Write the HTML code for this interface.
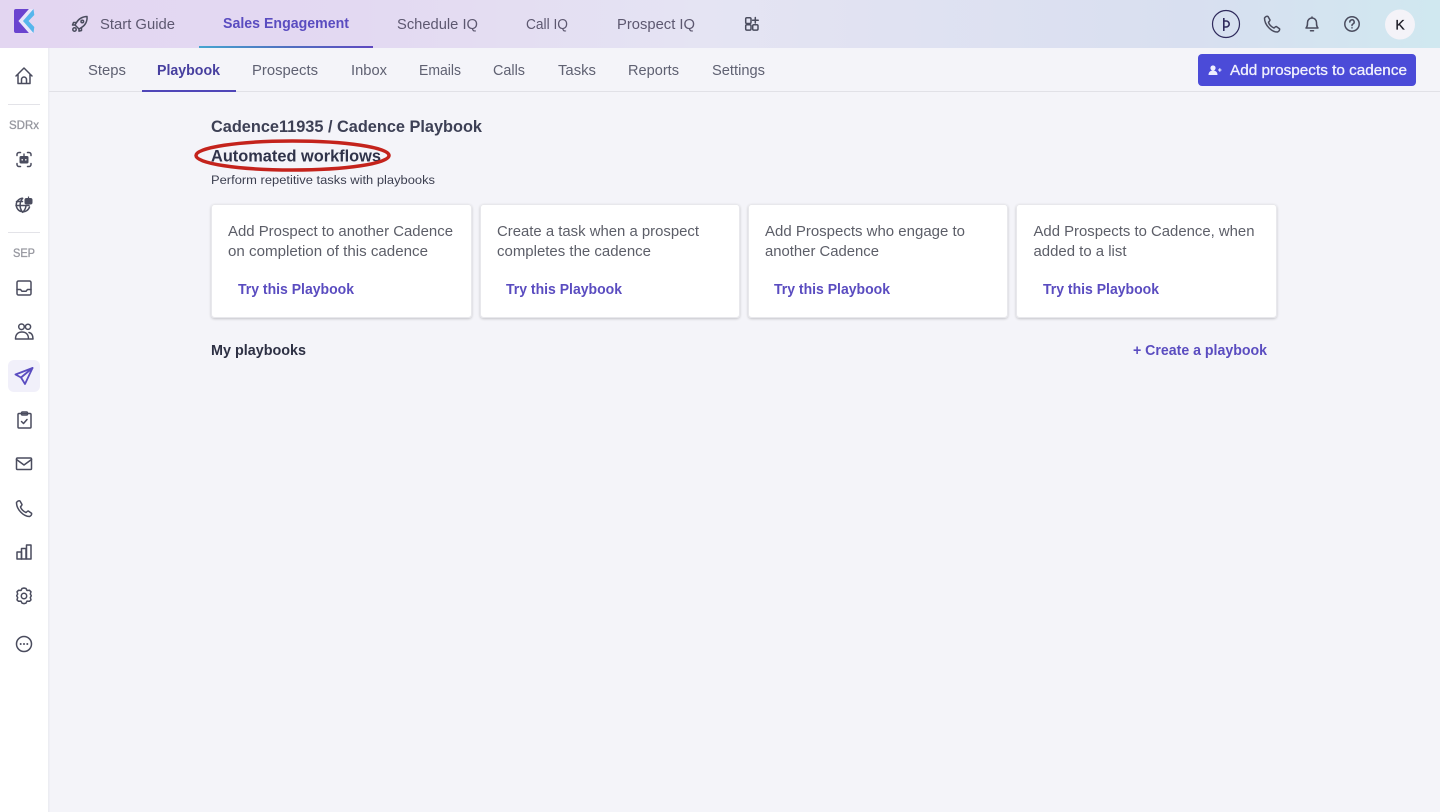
<!DOCTYPE html>
<html lang="en"><head><meta charset="utf-8"><title>Cadence Playbook</title>
<style>
html,body{margin:0;padding:0;width:1440px;height:812px;overflow:hidden;background:#f4f4f9}
svg{display:block;position:absolute;left:0;top:0;font-size:14px}
text{font-family:"Liberation Sans",sans-serif}
.top{fill:#5d5870;font-size:14.5px}
.tab{fill:#5f6172;font-size:14.5px}
.b{font-weight:bold}
.ct{fill:#5c5e68;font-size:14.5px}
.try{fill:#5a4cc0;font-weight:bold;font-size:14.5px}
.ic{fill:none;stroke:#4a4c5e;stroke-width:1.5;stroke-linecap:round;stroke-linejoin:round}
.card{fill:#fff;stroke:#e8e8ec;stroke-width:1;filter:url(#sh)}
</style></head><body>
<svg width="1440" height="812" viewBox="0 0 1440 812" xmlns="http://www.w3.org/2000/svg">
<defs>
<linearGradient id="tg" x1="0" x2="1" y1="0" y2="0"><stop offset="0" stop-color="#e3d6f1"/><stop offset=".25" stop-color="#e3d9f2"/><stop offset=".49" stop-color="#e5e4f3"/><stop offset=".83" stop-color="#d8dff0"/><stop offset="1" stop-color="#d0e8f0"/></linearGradient>
<linearGradient id="ug" x1="0" x2="1" y1="0" y2="0"><stop offset="0" stop-color="#45a5d0"/><stop offset=".5" stop-color="#5070c0"/><stop offset="1" stop-color="#5e48c0"/></linearGradient>
<filter id="sh" x="-5%" y="-5%" width="110%" height="115%"><feDropShadow dx="0" dy="1" stdDeviation="1.3" flood-color="#000" flood-opacity=".2"/></filter>
</defs>
<rect width="1440" height="812" fill="#f4f4f9"/>
<rect width="1440" height="48" fill="url(#tg)"/>
<rect x="199" y="46" width="174" height="2" fill="url(#ug)"/>
<rect y="48" width="48" height="764" fill="#fff"/>
<rect x="48" y="48" width="1.5" height="764" fill="#ecedf2"/>
<rect x="49" y="91" width="1391" height="1" fill="#e1e1e7"/>
<rect x="142" y="90" width="94" height="2" fill="#4f46b8"/>

<!-- logo -->
<path d="M16 9 H29 L18.500 21 L29 33 H16 a2 2 0 0 1 -2-2 V11 a2 2 0 0 1 2-2Z" fill="#6a44cf"/>
<path d="M29 9 L18.500 21 L29 33 H33.500 L23 21 L33.500 9Z" fill="#e9e6fb"/>
<path d="M33.500 9 L23 21 L33.500 33 L34.300 27 L28.500 21 L34.300 15Z" fill="#56b6ec"/>

<!-- rocket -->
<g class="ic">
<path d="M87 16.500 C82.500 16.500 78.500 19 76.500 22.500 L75 25 L79 29 L81.500 27.500 C85 25.500 87.500 21.500 87 16.500Z"/>
<circle cx="82.300" cy="21.500" r="1.300"/>
<path d="M76.500 22.500 L73.500 22.500 L72.500 25 L75 25 M81.500 27.500 L81.500 30.500 L79 31.200 L79 29"/>
<circle cx="74.500" cy="29.500" r="1.700"/>
</g>

<text class="top" x="100" y="29" textLength="75" lengthAdjust="spacingAndGlyphs">Start Guide</text>
<text class="b" x="223" y="28" textLength="126" lengthAdjust="spacingAndGlyphs" fill="#5a4cc0" font-size="14.5">Sales Engagement</text>
<text class="top" x="397" y="29" textLength="81" lengthAdjust="spacingAndGlyphs">Schedule IQ</text>
<text class="top" x="526" y="29" textLength="42" lengthAdjust="spacingAndGlyphs">Call IQ</text>
<text class="top" x="617" y="29" textLength="78" lengthAdjust="spacingAndGlyphs">Prospect IQ</text>
<g class="ic">
<rect x="745.700" y="17.700" width="5.300" height="5.800" rx="1.200"/><rect x="745.700" y="24.800" width="5.300" height="5.300" rx="1.200"/><rect x="752.700" y="24.800" width="5.300" height="5.300" rx="1.200"/>
<path d="M755.300 17.500v5.500M752.500 20.300h5.700"/>
</g>

<!-- right icons -->
<circle cx="1226" cy="24" r="13.500" fill="none" stroke="#2f2a5c" stroke-width="1.200"/>
<path d="M1223.800 18v13" stroke="#2f2a5c" stroke-width="1.600" fill="none"/>
<path d="M1224 21h2.200a3 3 0 0 1 0 6H1224" stroke="#2f2a5c" stroke-width="1.600" fill="none"/>
<path class="ic" transform="translate(1263.500 15.500)" d="M1 2.500 C2 1 3.500 .5 4.500 1 L6.500 4.500 C6.500 5.500 5.500 6 5 6.800 C5.500 9 8 11.500 10.500 12.500 C11.300 12 11.800 11 12.800 11 L16 13.200 C16.500 14.500 15.500 16 14 16.500 C8 16.500 1 9.500 1 2.500Z"/>
<g class="ic">
<path d="M1306 28 c1.500-1.500 1.500-3 1.500-5.500 a4.500 4.500 0 0 1 9 0 c0 2.500 0 4 1.500 5.500z"/>
<path d="M1310.500 30.800h3"/>
<path d="M1312 17v.8"/>
<circle cx="1352" cy="24" r="7.200"/>
<path d="M1349.800 22a2.200 2.200 0 1 1 3.300 1.900c-.8.5-1.100.9-1.100 1.600"/>
<path d="M1352 27.800v.1"/>
</g>
<circle cx="1400" cy="24.500" r="15" fill="#f4f3f8"/>
<text x="1400" y="29.500" text-anchor="middle" font-size="14" fill="#1d1d26" stroke="#1d1d26" stroke-width=".3">K</text>

<!-- tabs -->
<text class="tab" x="88" y="75" textLength="38" lengthAdjust="spacingAndGlyphs">Steps</text>
<text class="b" x="157" y="75" textLength="63" lengthAdjust="spacingAndGlyphs" font-size="14.5" fill="#473f9f">Playbook</text>
<text class="tab" x="252" y="75" textLength="66" lengthAdjust="spacingAndGlyphs">Prospects</text>
<text class="tab" x="351" y="75" textLength="36" lengthAdjust="spacingAndGlyphs">Inbox</text>
<text class="tab" x="419" y="75" textLength="42" lengthAdjust="spacingAndGlyphs">Emails</text>
<text class="tab" x="493" y="75" textLength="32" lengthAdjust="spacingAndGlyphs">Calls</text>
<text class="tab" x="558" y="75" textLength="38" lengthAdjust="spacingAndGlyphs">Tasks</text>
<text class="tab" x="628" y="75" textLength="51" lengthAdjust="spacingAndGlyphs">Reports</text>
<text class="tab" x="712" y="75" textLength="53" lengthAdjust="spacingAndGlyphs">Settings</text>

<!-- button -->
<rect x="1198" y="54" width="218" height="32" rx="4" fill="#4b4bd8"/>
<circle cx="1213" cy="68" r="2.600" fill="#eef"/>
<path d="M1208.500 75c0-3 2-4.500 4.500-4.500s4.500 1.500 4.500 4.500z" fill="#eef"/>
<path d="M1218 70h3.500M1219.800 68.300v3.500" stroke="#eef" stroke-width="1.100"/>
<text x="1230" y="75" textLength="177" lengthAdjust="spacingAndGlyphs" font-size="15" fill="#f1f1fd" stroke="#f1f1fd" stroke-width=".3">Add prospects to cadence</text>

<!-- sidebar -->
<rect x="8" y="104" width="32" height="1" fill="#e3e3e8"/>
<rect x="8" y="232" width="32" height="1" fill="#e3e3e8"/>
<text x="9" y="129" font-size="11.500" fill="#96979f" stroke="#96979f" stroke-width=".3" textLength="30" lengthAdjust="spacingAndGlyphs">SDRx</text>
<text x="13" y="257" font-size="11.500" fill="#96979f" stroke="#96979f" stroke-width=".3" textLength="22" lengthAdjust="spacingAndGlyphs">SEP</text>
<!-- home -->
<g class="ic"><path d="M16 76 L24 68 L32 76 M18 74 V83.500 H30 V74 M21.500 83.500 V79.500 a2.500 2.500 0 0 1 5 0 V83.500"/></g>
<!-- robot -->
<g class="ic">
<path d="M17 155.500 v-1 a2 2 0 0 1 2-2 h1.500 M27.500 152.500 H29 a2 2 0 0 1 2 2 V155.500 M17 163.500 v1 a2 2 0 0 0 2 2 h1.500 M27.500 166.500 H29 a2 2 0 0 0 2-2 V163.500"/>
</g>
<rect x="19.500" y="156" width="9" height="7.500" rx="1.500" fill="#4a4c5e"/>
<path d="M24 156v-2.500" stroke="#4a4c5e" stroke-width="1.400"/>
<circle cx="22.200" cy="159.800" r=".8" fill="#fff"/><circle cx="25.800" cy="159.800" r=".8" fill="#fff"/>
<!-- globe bot -->
<g class="ic">
<path d="M29.500 207 a6.800 6.800 0 1 1 -7.500-8.800"/>
<path d="M16 205.500h13M16.500 201.500h6"/>
<path d="M22.700 198.300c-3.500 4-3.500 10 0 14 2-2 3-4 3.300-6.500"/>
</g>
<rect x="24.500" y="198" width="8" height="6.500" rx="2" fill="#4a4c5e"/>
<path d="M28.500 198v-1.500" stroke="#4a4c5e" stroke-width="1.200"/>
<!-- inbox -->
<g class="ic"><rect x="17" y="281" width="14" height="14" rx="1.500"/><path d="M17 289.500 h3.500 l1.500 1.800 h4 l1.500-1.800 H31"/></g>
<!-- people -->
<g class="ic">
<circle cx="21.500" cy="326.800" r="2.800"/><circle cx="28" cy="326.800" r="2.600"/>
<path d="M15.500 339 c0-4.500 2.500-7 6.500-7 s6.500 2.500 6.500 7z"/>
<path d="M29 332.500 c2.500.5 4 2.800 4 6.500 h-3.500"/>
</g>
<!-- send active -->
<rect x="8" y="360" width="32" height="32" rx="6" fill="#f1f0fa"/>
<g fill="none" stroke="#5a4cc0" stroke-width="1.800" stroke-linejoin="round" stroke-linecap="round">
<path d="M32.500 368 L15.500 374.500 L21 377.500 L25 384 Z"/>
<path d="M21 377.500 L32.500 368"/>
</g>
<!-- clipboard -->
<g class="ic"><rect x="18" y="413.500" width="13" height="14.500" rx="1"/><rect x="21.500" y="412" width="6" height="3" rx="1"/><path d="M21.500 421.500 l2 2 l3.500-4"/></g>
<!-- mail -->
<g class="ic"><rect x="16.500" y="458" width="15" height="11.500" rx="1"/><path d="M16.500 459.500 L24 465 L31.500 459.500"/></g>
<!-- phone -->
<path class="ic" transform="translate(15.500 500)" d="M1 2.500 C2 1 3.500 .5 4.500 1 L6.500 4.500 C6.500 5.500 5.500 6 5 6.800 C5.500 9 8 11.500 10.500 12.500 C11.300 12 11.800 11 12.800 11 L16 13.200 C16.500 14.500 15.500 16 14 16.500 C8 16.500 1 9.500 1 2.500Z"/>
<!-- chart -->
<g class="ic"><rect x="17" y="552" width="4.500" height="7"/><rect x="21.500" y="548.500" width="4.500" height="10.500"/><rect x="26.500" y="545" width="4.500" height="14"/></g>
<!-- gear -->
<g class="ic">
<path d="M24 588 l2 .5 1 2 2.500-.2 1.500 1.500 -.7 2.200 1 1.800 -1 1.800 .7 2.200 -1.500 1.500 -2.500-.2 -1 2 -2 .5 -2-.5 -1-2 -2.500.2 -1.500-1.500 .7-2.200 -1-1.800 1-1.800 -.7-2.200 1.500-1.500 2.500.2 1-2z"/>
<circle cx="24" cy="596" r="2.700"/>
</g>
<!-- more -->
<circle cx="24" cy="644" r="7.500" class="ic"/>
<circle cx="20.700" cy="644" r="1" fill="#4a4c5e"/><circle cx="24" cy="644" r="1" fill="#4a4c5e"/><circle cx="27.300" cy="644" r="1" fill="#4a4c5e"/>

<!-- heading -->
<text class="b" x="211" y="132" font-size="16.800" fill="#3d4055" textLength="271" lengthAdjust="spacingAndGlyphs">Cadence11935 / Cadence Playbook</text>
<text class="b" x="211" y="161.500" font-size="16.800" fill="#30334a" textLength="170" lengthAdjust="spacingAndGlyphs">Automated workflows</text>
<ellipse cx="292.500" cy="155.500" rx="96.500" ry="14.500" fill="none" stroke="#c4231c" stroke-width="3.500"/>
<text x="211" y="184" font-size="12.300" fill="#3c3f50" textLength="224" lengthAdjust="spacingAndGlyphs">Perform repetitive tasks with playbooks</text>

<!-- cards -->
<rect class="card" x="211.500" y="204.500" width="260" height="113" rx="3"/>
<rect class="card" x="480.500" y="204.500" width="259" height="113" rx="3"/>
<rect class="card" x="748.500" y="204.500" width="259" height="113" rx="3"/>
<rect class="card" x="1016.500" y="204.500" width="260" height="113" rx="3"/>

<text class="ct" x="228" y="236" textLength="225" lengthAdjust="spacingAndGlyphs">Add Prospect to another Cadence</text>
<text class="ct" x="228" y="256" textLength="200" lengthAdjust="spacingAndGlyphs">on completion of this cadence</text>
<text class="try" x="238" y="294" textLength="116" lengthAdjust="spacingAndGlyphs">Try this Playbook</text>

<text class="ct" x="497" y="236" textLength="202" lengthAdjust="spacingAndGlyphs">Create a task when a prospect</text>
<text class="ct" x="497" y="256" textLength="154" lengthAdjust="spacingAndGlyphs">completes the cadence</text>
<text class="try" x="506" y="294" textLength="116" lengthAdjust="spacingAndGlyphs">Try this Playbook</text>

<text class="ct" x="765" y="236" textLength="200" lengthAdjust="spacingAndGlyphs">Add Prospects who engage to</text>
<text class="ct" x="765" y="256" textLength="114" lengthAdjust="spacingAndGlyphs">another Cadence</text>
<text class="try" x="774" y="294" textLength="116" lengthAdjust="spacingAndGlyphs">Try this Playbook</text>

<text class="ct" x="1033.500" y="236" textLength="221" lengthAdjust="spacingAndGlyphs">Add Prospects to Cadence, when</text>
<text class="ct" x="1033.500" y="256" textLength="93" lengthAdjust="spacingAndGlyphs">added to a list</text>
<text class="try" x="1043" y="294" textLength="116" lengthAdjust="spacingAndGlyphs">Try this Playbook</text>

<text class="b" x="211" y="355" font-size="14.500" fill="#2d3044" textLength="95" lengthAdjust="spacingAndGlyphs">My playbooks</text>
<text class="try" x="1133" y="355" textLength="134" lengthAdjust="spacingAndGlyphs">+ Create a playbook</text>
</svg>
</body></html>
